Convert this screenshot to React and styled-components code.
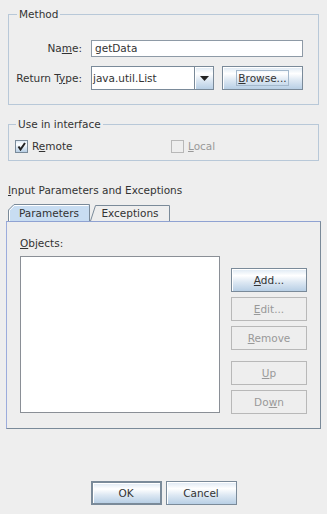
import React from "react";
import styled, { createGlobalStyle } from "styled-components";

const GlobalStyle = createGlobalStyle`
  html, body {
    margin: 0;
    padding: 0;
    background: #eeeeee;
  }
  body {
    font-family: "DejaVu Sans", "Liberation Sans", sans-serif;
    font-size: 10.5px;
    color: #333333;
  }
`;

const buttonGradient = "linear-gradient(to bottom, #dde8f3 0%, #ffffff 30%, #dde8f3 60%, #b8cfe5 100%)";

const Dialog = styled.div`
  width: 327px;
  height: 514px;
  display: flex;
  flex-direction: column;
  background: #eeeeee;
  overflow: hidden;
`;

const Group = styled.fieldset`
  margin: ${p => p.$top}px 8px 0;
  padding: 0 15px ${p => p.$bottom}px ${p => p.$left}px;
  border: 1px solid #b8c8d8;
  min-width: 0;
`;

const Legend = styled.legend`
  padding: 0 2px;
  margin-left: 1px;
  line-height: 13px;
  color: #333333;
`;

const U = styled.span`
  text-decoration: underline;
  text-underline-offset: 1px;
`;

const FormGrid = styled.div`
  display: grid;
  grid-template-columns: 66px 212px;
  column-gap: 9px;
  row-gap: 9px;
  margin-top: 19px;
  align-items: center;
`;

const FieldLabel = styled.label`
  text-align: right;
  white-space: nowrap;
  line-height: 13px;
`;

const TextField = styled.div`
  box-sizing: border-box;
  height: 17px;
  border: 1px solid #8e9aa6;
  background: #ffffff;
  padding-left: 3px;
  line-height: 15px;
  color: #333333;
`;

const Inline = styled.div`
  display: flex;
  gap: 8px;
`;

const Combo = styled.div`
  box-sizing: border-box;
  width: 123px;
  height: 24px;
  display: flex;
  border: 1px solid #7a8a99;
  background: #ffffff;
`;

const ComboValue = styled.div`
  flex: 1;
  display: flex;
  align-items: center;
  padding-left: 1px;
  border-right: 1px solid #7a8a99;
  color: #333333;
`;

const ComboArrow = styled.div`
  width: 18px;
  display: flex;
  align-items: center;
  justify-content: center;
  background: ${buttonGradient};
  box-shadow: inset 1px 1px 0 #ffffff;
`;

const Button = styled.button`
  box-sizing: border-box;
  width: ${p => p.$w}px;
  height: 24px;
  margin: 0;
  padding: 0;
  font: inherit;
  color: ${p => (p.disabled ? "#999999" : "#333333")};
  border: ${p => (p.$default ? 2 : 1)}px solid ${p => (p.disabled ? "#b8b8b8" : "#7a8a99")};
  background: ${p => (p.disabled ? "#eeeeee" : buttonGradient)};
  box-shadow: ${p => (p.disabled ? "none" : "inset 1px 1px 0 #ffffff")};
  display: flex;
  align-items: center;
  justify-content: center;
`;

const FocusRing = styled.span`
  border: 1px solid #a3b8cc;
  padding: 0 1px;
  line-height: 14px;
`;

const CheckRow = styled.div`
  display: grid;
  grid-template-columns: 156px auto;
  margin-top: 9px;
`;

const Check = styled.label`
  display: flex;
  align-items: center;
  gap: 4px;
  line-height: 13px;
  color: ${p => (p.$disabled ? "#999999" : "#333333")};
`;

const Box = styled.span`
  box-sizing: border-box;
  width: 13px;
  height: 13px;
  display: flex;
  align-items: center;
  justify-content: center;
  border: 1px solid ${p => (p.$disabled ? "#b8b8b8" : "#7a8a99")};
  background: ${p => (p.$disabled ? "#eeeeee" : buttonGradient)};
`;

const SectionLabel = styled.div`
  margin: 23px 0 0 8px;
  line-height: 13px;
`;

const TabRow = styled.div`
  display: flex;
  margin: 7px 0 0 8px;
  height: 17px;
`;

const Tab = styled.div`
  position: relative;
  width: ${p => p.$w}px;
  height: 17px;
  display: flex;
  align-items: center;
  justify-content: center;
  padding-top: 1px;
  box-sizing: border-box;
  color: #333333;

  svg {
    position: absolute;
    inset: 0;
  }
  span {
    position: relative;
  }
`;

const TabPanel = styled.div`
  margin: 0 6px;
  border: 1px solid #7a8a99;
  border-top-color: #8fa2d2;
  border-left-color: #9cacdc;
  padding: 15px 13px 14px 13px;
  display: flex;
  flex-direction: column;
`;

const ObjectsLabel = styled.div`
  line-height: 13px;
`;

const ListRow = styled.div`
  display: flex;
  gap: 11px;
  margin-top: 6px;
`;

const ListBox = styled.div`
  box-sizing: border-box;
  width: 200px;
  height: 157px;
  background: #ffffff;
  border: 1px solid #8a8f96;
`;

const ButtonColumn = styled.div`
  display: flex;
  flex-direction: column;
  gap: 5px;
  padding-top: 12px;
`;

const Spacer = styled.div`
  height: 1px;
`;

const Footer = styled.div`
  display: flex;
  justify-content: center;
  gap: 4px;
  margin-top: 52px;
`;

const CheckMark = () => (
  <svg width="9" height="9" viewBox="0 0 9 9">
    <path d="M1.5 4.5 L3.5 7.5 L8 1" fill="none" stroke="#222" strokeWidth="2" />
  </svg>
);

const DownArrow = () => (
  <svg width="9" height="5" viewBox="0 0 9 5">
    <path d="M0 0 H9 L4.5 5 Z" fill="#222" />
  </svg>
);

const TabShape = ({ w, selected }) =>
  selected ? (
    <svg width={w} height="17" viewBox={`0 0 ${w} 17`}>
      <path d={`M0.5 17 V6 L6 0.5 H${w - 0.5} V17 Z`} fill="#c8ddf2" />
      <path d={`M0.5 17 V6 L6 0.5 H${w - 0.5} V17`} fill="none" stroke="#7a8a99" />
      <path d={`M1.5 17 V6.4 L6.4 1.5 H${w - 1.5}`} fill="none" stroke="#ffffff" />
    </svg>
  ) : (
    <svg width={w} height="17" viewBox={`0 0 ${w} 17`}>
      <path d={`M0.5 17 L5.5 1.5 H${w - 0.5} V17 Z`} fill="#eeeeee" />
      <path d={`M0.5 17 L5.5 1.5 H${w - 0.5} V17`} fill="none" stroke="#7a8a99" />
    </svg>
  );

export default function App() {
  return (
    <Dialog>
      <GlobalStyle />

      <Group $top={8} $bottom={14} $left={7}>
        <Legend>Method</Legend>
        <FormGrid>
          <FieldLabel>
            Na<U>m</U>e:
          </FieldLabel>
          <TextField>getData</TextField>
          <FieldLabel>
            Return T<U>y</U>pe:
          </FieldLabel>
          <Inline>
            <Combo>
              <ComboValue>java.util.List</ComboValue>
              <ComboArrow>
                <DownArrow />
              </ComboArrow>
            </Combo>
            <Button $w={81}>
              <FocusRing>
                <U>B</U>rowse...
              </FocusRing>
            </Button>
          </Inline>
        </FormGrid>
      </Group>

      <Group $top={13} $bottom={7} $left={6}>
        <Legend>Use in interface</Legend>
        <CheckRow>
          <Check>
            <Box>
              <CheckMark />
            </Box>
            <span>
              R<U>e</U>mote
            </span>
          </Check>
          <Check $disabled>
            <Box $disabled />
            <span>
              <U>L</U>ocal
            </span>
          </Check>
        </CheckRow>
      </Group>

      <SectionLabel>
        <U>I</U>nput Parameters and Exceptions
      </SectionLabel>

      <TabRow>
        <Tab $w={82}>
          <TabShape w={82} selected />
          <span>Parameters</span>
        </Tab>
        <Tab $w={80}>
          <TabShape w={80} />
          <span>Exceptions</span>
        </Tab>
      </TabRow>

      <TabPanel>
        <ObjectsLabel>
          <U>O</U>bjects:
        </ObjectsLabel>
        <ListRow>
          <ListBox />
          <ButtonColumn>
            <Button $w={76}>
              <span>
                <U>A</U>dd...
              </span>
            </Button>
            <Button $w={76} disabled>
              <span>
                <U>E</U>dit...
              </span>
            </Button>
            <Button $w={76} disabled>
              <span>
                <U>R</U>emove
              </span>
            </Button>
            <Spacer />
            <Button $w={76} disabled>
              <span>
                <U>U</U>p
              </span>
            </Button>
            <Button $w={76} disabled>
              <span>
                Do<U>w</U>n
              </span>
            </Button>
          </ButtonColumn>
        </ListRow>
      </TabPanel>

      <Footer>
        <Button $w={71} $default>
          OK
        </Button>
        <Button $w={71}>Cancel</Button>
      </Footer>
    </Dialog>
  );
}
